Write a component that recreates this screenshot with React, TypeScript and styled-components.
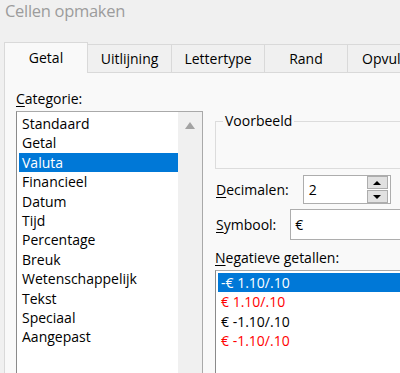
import styled, { createGlobalStyle } from 'styled-components';

const GlobalStyle = createGlobalStyle`
  html, body {
    margin: 0;
    padding: 0;
    background: #f0f0f0;
  }
  body {
    font-family: "Open Sans", "Noto Sans", "Liberation Sans", sans-serif;
    color: #000;
  }
`;

const Window = styled.div`
  width: 400px;
  height: 373px;
  overflow: hidden;
  background: #f0f0f0;
  display: flex;
  flex-direction: column;
`;

const Title = styled.div`
  height: 42px;
  padding-left: 5px;
  font-size: 16.5px;
  letter-spacing: -0.3px;
  line-height: 22px;
  color: #9c9c9c;
  box-sizing: border-box;
`;

const TabStrip = styled.div`
  display: flex;
  align-items: flex-end;
  height: 30px;
  padding-left: 4px;
  position: relative;
  z-index: 1;
`;

const Tab = styled.div<{ $active?: boolean; $width: number }>`
  flex: none;
  width: ${p => p.$width}px;
  box-sizing: border-box;
  height: ${p => (p.$active ? 31 : 28)}px;
  margin-bottom: ${p => (p.$active ? -1 : 0)}px;
  display: flex;
  align-items: center;
  justify-content: center;
  font-size: 14px;
  background: ${p => (p.$active ? '#f9f9f9' : '#f0f0f0')};
  border: 1px solid #d9d9d9;
  border-left: ${p => (p.$active ? '1px solid #d9d9d9' : 'none')};
  border-bottom: none;
  padding-bottom: ${p => (p.$active ? 2 : 0)}px;
  white-space: nowrap;
  overflow: hidden;
`;

const Panel = styled.div`
  flex: 1;
  margin-left: 4px;
  background: #f9f9f9;
  border-top: 1px solid #d9d9d9;
  border-left: 1px solid #d9d9d9;
  display: grid;
  grid-template-columns: 187px 230px;
  column-gap: 12px;
  padding: 16px 0 0 11px;
`;

const Column = styled.div`
  display: flex;
  flex-direction: column;
`;

const Label = styled.div<{ $top?: number }>`
  font-size: 14px;
  line-height: 19px;
  white-space: nowrap;
  margin-top: ${p => p.$top ?? 0}px;
`;

const Accel = styled.span`
  text-decoration: underline;
  text-underline-offset: 2px;
`;

const ListBox = styled.div<{ $top: number }>`
  margin-top: ${p => p.$top}px;
  flex: 1;
  background: #fff;
  border: 1px solid #a9a9a9;
  border-left-color: #8a8a8a;
  border-bottom: none;
  display: flex;
  padding: 1px 0 0 2px;
`;

const Items = styled.div`
  flex: 1;
  display: flex;
  flex-direction: column;
  padding-top: 1px;
`;

const Item = styled.div<{ $selected?: boolean; $red?: boolean }>`
  height: 19.4px;
  line-height: 19.4px;
  font-size: 14px;
  padding-left: 3px;
  white-space: nowrap;
  background: ${p => (p.$selected ? '#0078d7' : 'transparent')};
  color: ${p => (p.$selected ? '#fff' : p.$red ? '#ff0000' : '#000')};
`;

const ScrollBar = styled.div`
  width: 24px;
  background: #f0f0f0;
  display: flex;
  justify-content: center;
  padding-top: 10px;
  margin-top: -1px;
`;

const UpArrow = styled.div`
  width: 0;
  height: 0;
  border-left: 5px solid transparent;
  border-right: 5px solid transparent;
  border-bottom: 7px solid #a3a3a3;
`;

const Group = styled.fieldset`
  margin: 24px 0 0 0;
  height: 56px;
  box-sizing: border-box;
  border: 1px solid #dcdcdc;
  border-right: none;
  padding: 0;
`;

const Legend = styled.legend`
  margin-left: 7px;
  padding: 0 2px;
  font-size: 14px;
  line-height: 16px;
`;

const FieldRow = styled.div<{ $top: number; $gap: number }>`
  display: flex;
  align-items: center;
  gap: ${p => p.$gap}px;
  margin-top: ${p => p.$top}px;
  padding-left: 1px;
`;

const SpinBox = styled.div`
  width: 88px;
  height: 29px;
  box-sizing: border-box;
  border: 1px solid #adadad;
  background: #fff;
  display: flex;
  align-items: center;
  padding: 0 2px 0 5px;
  font-size: 14px;
`;

const SpinValue = styled.span`
  flex: 1;
`;

const SpinButtons = styled.div`
  display: flex;
  flex-direction: column;
  gap: 1px;
  width: 21px;
`;

const SpinButton = styled.div`
  height: 11px;
  background: #e1e1e1;
  border: 1px solid #adadad;
  display: flex;
  align-items: center;
  justify-content: center;
`;

const Triangle = styled.div<{ $down?: boolean }>`
  width: 0;
  height: 0;
  border-left: 4px solid transparent;
  border-right: 4px solid transparent;
  ${p => (p.$down ? 'border-top: 4px solid #000;' : 'border-bottom: 4px solid #000;')}
`;

const TextInput = styled.div`
  flex: 1;
  height: 31px;
  box-sizing: border-box;
  border: 1px solid #adadad;
  border-right: none;
  background: #fff;
  display: flex;
  align-items: center;
  padding-left: 4px;
  font-size: 14px;
`;

const categories = [
  'Standaard',
  'Getal',
  'Valuta',
  'Financieel',
  'Datum',
  'Tijd',
  'Percentage',
  'Breuk',
  'Wetenschappelijk',
  'Tekst',
  'Speciaal',
  'Aangepast',
];

const negatives = [
  { text: '-€ 1.10/.10', red: false },
  { text: '€ 1.10/.10', red: true },
  { text: '€ -1.10/.10', red: false },
  { text: '€ -1.10/.10', red: true },
];

const tabs = [
  { name: 'Getal', width: 84 },
  { name: 'Uitlijning', width: 84 },
  { name: 'Lettertype', width: 93 },
  { name: 'Rand', width: 83 },
  { name: 'Opvulling', width: 91 },
];

export default function App() {
  return (
    <Window>
      <GlobalStyle />
      <Title>Cellen opmaken</Title>
      <TabStrip>
        {tabs.map((t, i) => (
          <Tab key={t.name} $active={i === 0} $width={t.width}>
            {t.name}
          </Tab>
        ))}
      </TabStrip>
      <Panel>
        <Column>
          <Label>
            <Accel>C</Accel>ategorie:
          </Label>
          <ListBox $top={3}>
            <Items>
              {categories.map(c => (
                <Item key={c} $selected={c === 'Valuta'}>
                  {c}
                </Item>
              ))}
            </Items>
            <ScrollBar>
              <UpArrow />
            </ScrollBar>
          </ListBox>
        </Column>
        <Column>
          <Group>
            <Legend>Voorbeeld</Legend>
          </Group>
          <FieldRow $top={6} $gap={14}>
            <Label>
              <Accel>D</Accel>ecimalen:
            </Label>
            <SpinBox>
              <SpinValue>2</SpinValue>
              <SpinButtons>
                <SpinButton>
                  <Triangle />
                </SpinButton>
                <SpinButton>
                  <Triangle $down />
                </SpinButton>
              </SpinButtons>
            </SpinBox>
          </FieldRow>
          <FieldRow $top={5} $gap={14}>
            <Label>
              <Accel>S</Accel>ymbool:
            </Label>
            <TextInput>€</TextInput>
          </FieldRow>
          <Label $top={8}>
            <Accel>N</Accel>egatieve getallen:
          </Label>
          <ListBox $top={3}>
            <Items>
              {negatives.map((n, i) => (
                <Item key={i} $selected={i === 0} $red={n.red}>
                  {n.text}
                </Item>
              ))}
            </Items>
          </ListBox>
        </Column>
      </Panel>
    </Window>
  );
}
